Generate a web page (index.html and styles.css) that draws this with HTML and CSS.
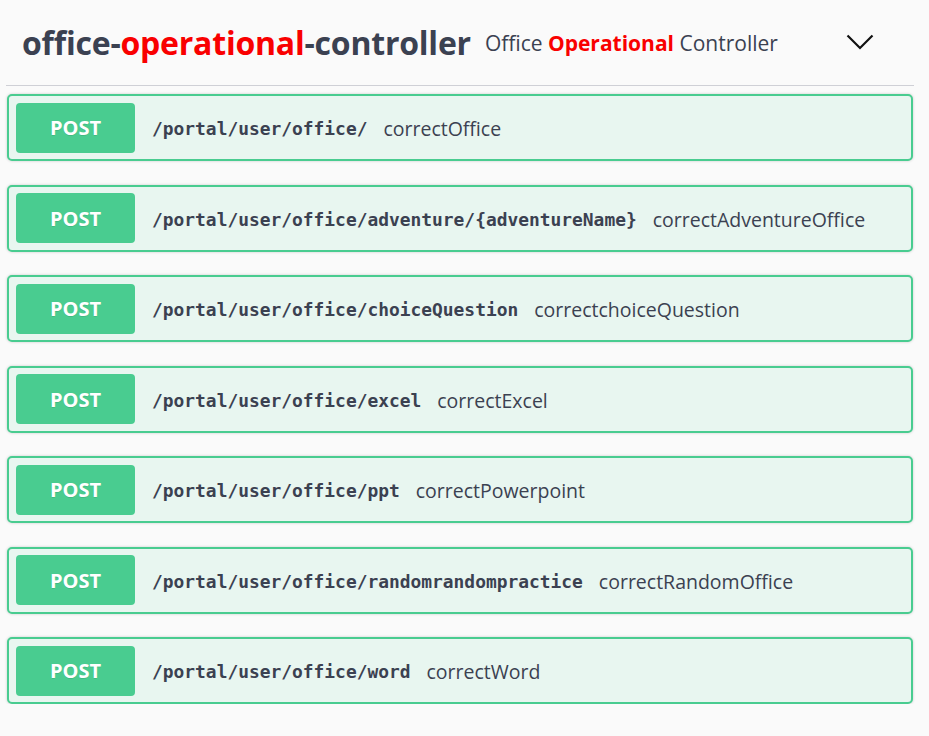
FILE: index.html
```html
<!DOCTYPE html>
<html>
<head>
<meta charset="utf-8">
<link rel="stylesheet" href="styles.css">
</head>
<body>
<div class="tag-section">
  <div class="tag-header">
    <h4 class="tag-title">office-<span class="red">operational</span>-controller</h4>
    <span class="tag-desc">Office <b class="red">Operational</b> Controller</span>
    <span class="spacer"></span>
    <svg class="chevron" width="28" height="16" viewBox="0 0 28 16"><path d="M1.5 1.5 L14 14 L26.5 1.5" fill="none" stroke="#111" stroke-width="2.2"/></svg>
  </div>
  <div class="ops">
    <div class="op"><span class="method">POST</span><span class="path">/portal/user/office/</span><span class="summary">correctOffice</span></div>
    <div class="op"><span class="method">POST</span><span class="path">/portal/user/office/adventure/{adventureName}</span><span class="summary">correctAdventureOffice</span></div>
    <div class="op"><span class="method">POST</span><span class="path">/portal/user/office/choiceQuestion</span><span class="summary">correctchoiceQuestion</span></div>
    <div class="op"><span class="method">POST</span><span class="path">/portal/user/office/excel</span><span class="summary">correctExcel</span></div>
    <div class="op"><span class="method">POST</span><span class="path">/portal/user/office/ppt</span><span class="summary">correctPowerpoint</span></div>
    <div class="op"><span class="method">POST</span><span class="path">/portal/user/office/randomrandompractice</span><span class="summary">correctRandomOffice</span></div>
    <div class="op"><span class="method">POST</span><span class="path">/portal/user/office/word</span><span class="summary">correctWord</span></div>
  </div>
</div>
</body>
</html>
```
FILE: styles.css
```css
html, body {
  margin: 0;
  padding: 0;
  background: #fafafa;
}
body {
  font-family: "Open Sans", sans-serif;
  color: #3b4151;
}
.tag-section {
  width: 908px;
  margin-left: 6px;
}
.tag-header {
  display: flex;
  align-items: center;
  height: 85px;
  padding-left: 16px;
  border-bottom: 1px solid #cfd0d6;
}
.tag-title {
  margin: 0;
  font-size: 32px;
  font-weight: 700;
  letter-spacing: -0.22px;
  color: #3b4151;
}
.red {
  color: #f90000;
}
.tag-desc {
  margin-left: 14px;
  font-size: 21px;
  color: #3b4151;
}
.tag-desc b {
  font-weight: 700;
}
.spacer {
  flex: 1;
}
.chevron {
  margin-right: 40px;
  margin-top: -2px;
}
.ops {
  display: flex;
  flex-direction: column;
  gap: 23.5px;
  padding: 8px 1px 0 1px;
}
.op {
  display: flex;
  align-items: center;
  height: 63px;
  padding: 0 7px;
  border: 2px solid #49cc90;
  border-radius: 5px;
  background: #e8f6f0;
  box-shadow: 0 0 3px rgba(0, 0, 0, 0.19);
}
.method {
  display: flex;
  align-items: center;
  justify-content: center;
  width: 119px;
  height: 50px;
  border-radius: 4px;
  background: #49cc90;
  color: #fff;
  font-weight: 700;
  font-size: 20px;
  text-shadow: 0 1px 0 rgba(0, 0, 0, 0.1);
}
.path {
  margin-left: 17px;
  padding-top: 2px;
  font-family: "DejaVu Sans Mono", monospace;
  font-weight: 700;
  font-size: 17.9px;
  color: #3b4151;
}
.summary {
  margin-left: 16px;
  padding-top: 2px;
  font-size: 19.5px;
  color: #3b4151;
}
```
